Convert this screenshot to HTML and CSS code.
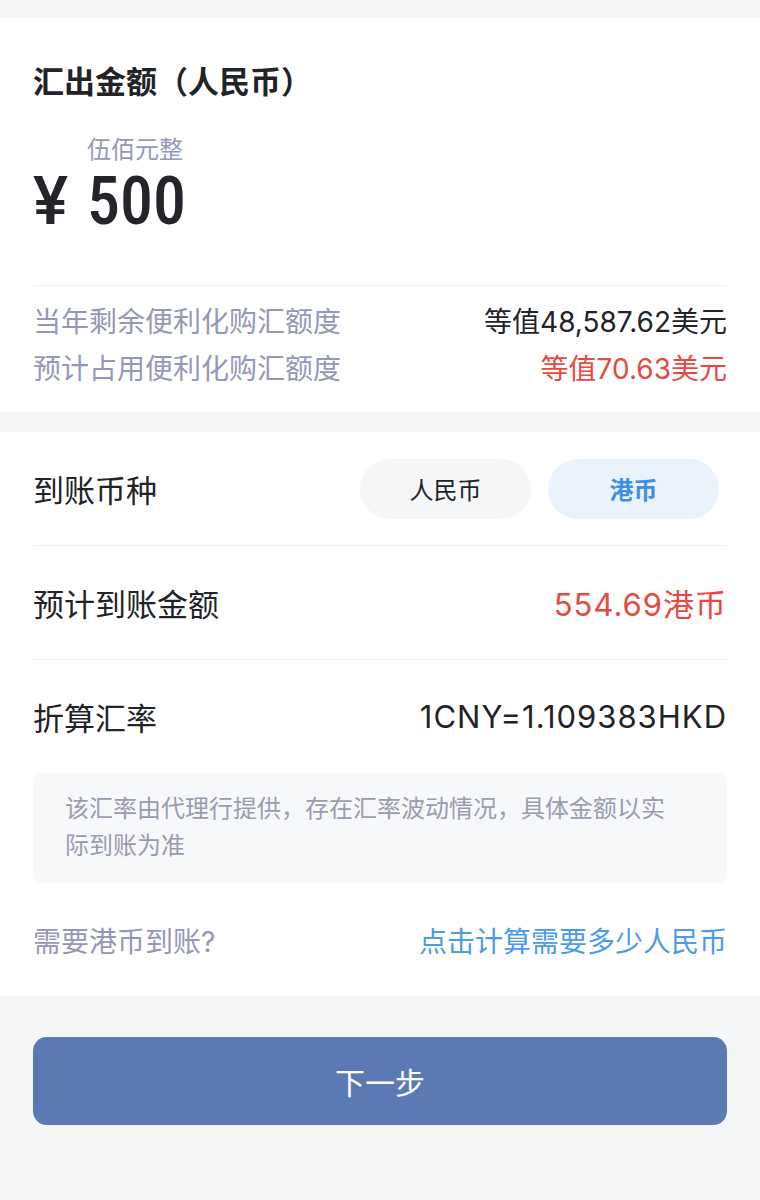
FILE: index.html
```html
<!DOCTYPE html>
<html lang="zh-CN">
<head>
    <meta charset="UTF-8">
    <meta name="viewport" content="width=device-width, initial-scale=1.0">
    <title>汇出金额</title>
    <link rel="stylesheet" href="styles.css">
</head>
<body>
    <div class="page">
        <section class="card amount-card">
            <h1 class="card-title">汇出金额（人民币）</h1>
            <div class="amount-words">伍佰元整</div>
            <div class="amount"><span class="amount-sign">¥</span>500</div>
            <div class="quota">
                <div class="quota-row">
                    <span class="quota-label">当年剩余便利化购汇额度</span>
                    <span class="quota-value">等值48,587.62美元</span>
                </div>
                <div class="quota-row">
                    <span class="quota-label">预计占用便利化购汇额度</span>
                    <span class="quota-value red">等值70.63美元</span>
                </div>
            </div>
        </section>

        <section class="card detail-card">
            <div class="detail-row">
                <span class="detail-label">到账币种</span>
                <div class="currency-switch">
                    <button class="currency-pill">人民币</button>
                    <button class="currency-pill active">港币</button>
                </div>
            </div>
            <div class="detail-row">
                <span class="detail-label">预计到账金额</span>
                <span class="detail-value red">554.69港币</span>
            </div>
            <div class="detail-row no-line">
                <span class="detail-label">折算汇率</span>
                <span class="detail-value">1CNY=1.109383HKD</span>
            </div>
            <div class="rate-note">该汇率由代理行提供，存在汇率波动情况，具体金额以实际到账为准</div>
            <div class="calc-row">
                <span class="calc-label">需要港币到账?</span>
                <a class="calc-link" href="#">点击计算需要多少人民币</a>
            </div>
        </section>

        <div class="footer">
            <button class="next-button">下一步</button>
        </div>
    </div>
</body>
</html>
```

FILE: styles.css
```css
body {
    margin: 0;
    background: #f5f6f8;
    font-family: Inter, "Noto Sans CJK SC", sans-serif;
    color: #222326;
}

.page {
    padding-top: 18px;
}

.card {
    background: #fff;
    padding: 0 33px;
}

.amount-card {
    padding-top: 42px;
    padding-bottom: 22px;
}

.card-title {
    margin: 0;
    font-size: 31px;
    line-height: 44px;
    font-weight: bold;
    color: #222326;
}

.amount-words {
    margin-top: 31px;
    padding-left: 54px;
    font-size: 24px;
    line-height: 30px;
    color: #9597b8;
}

.amount {
    font-family: "Roboto Condensed", "Liberation Sans Narrow", Roboto, sans-serif;
    font-size: 66px;
    line-height: 74px;
    font-weight: 500;
    color: #23252b;
}

.amount-sign {
    display: inline-block;
    margin-right: 19px;
    font-family: Roboto, sans-serif;
    font-size: 66px;
    font-weight: 500;
}

.quota {
    margin-top: 46px;
    border-top: 1px solid #eeeff2;
    padding-top: 10px;
}

.quota-row {
    display: flex;
    justify-content: space-between;
    align-items: center;
    height: 47px;
    font-size: 28px;
}

.quota-label {
    color: #9597b8;
}

.quota-value {
    color: #222326;
}

.red {
    color: #e5493f;
}

.detail-card {
    margin-top: 20px;
}

.detail-row {
    display: flex;
    justify-content: space-between;
    align-items: center;
    height: 113px;
    border-bottom: 1px solid #eeeff2;
}

.detail-row.no-line {
    border-bottom: none;
}

.detail-label {
    font-size: 31px;
    color: #222326;
}

.detail-value {
    font-size: 31px;
    letter-spacing: 1px;
}

.currency-switch {
    display: flex;
    gap: 17px;
    margin-right: 8px;
}

.currency-pill {
    width: 171px;
    height: 60px;
    border: none;
    border-radius: 30px;
    background: #f5f6f8;
    font-family: inherit;
    font-size: 24px;
    color: #222326;
}

.currency-pill.active {
    background: #eaf3fd;
    color: #3d8ee8;
    font-weight: bold;
}

.rate-note {
    background: #f7f8fa;
    border-radius: 8px;
    padding: 17px 52px 19px 32px;
    font-size: 24px;
    line-height: 37px;
    color: #9a9cae;
}

.calc-row {
    display: flex;
    justify-content: space-between;
    align-items: center;
    height: 113px;
    font-size: 28px;
}

.calc-label {
    color: #9597b8;
}

.calc-link {
    color: #4a9be8;
    text-decoration: none;
}

.footer {
    padding: 41px 33px 60px;
}

.next-button {
    display: block;
    width: 100%;
    height: 88px;
    border: none;
    border-radius: 14px;
    background: #5b79b4;
    color: #fff;
    font-family: inherit;
    font-size: 30px;
}
```
